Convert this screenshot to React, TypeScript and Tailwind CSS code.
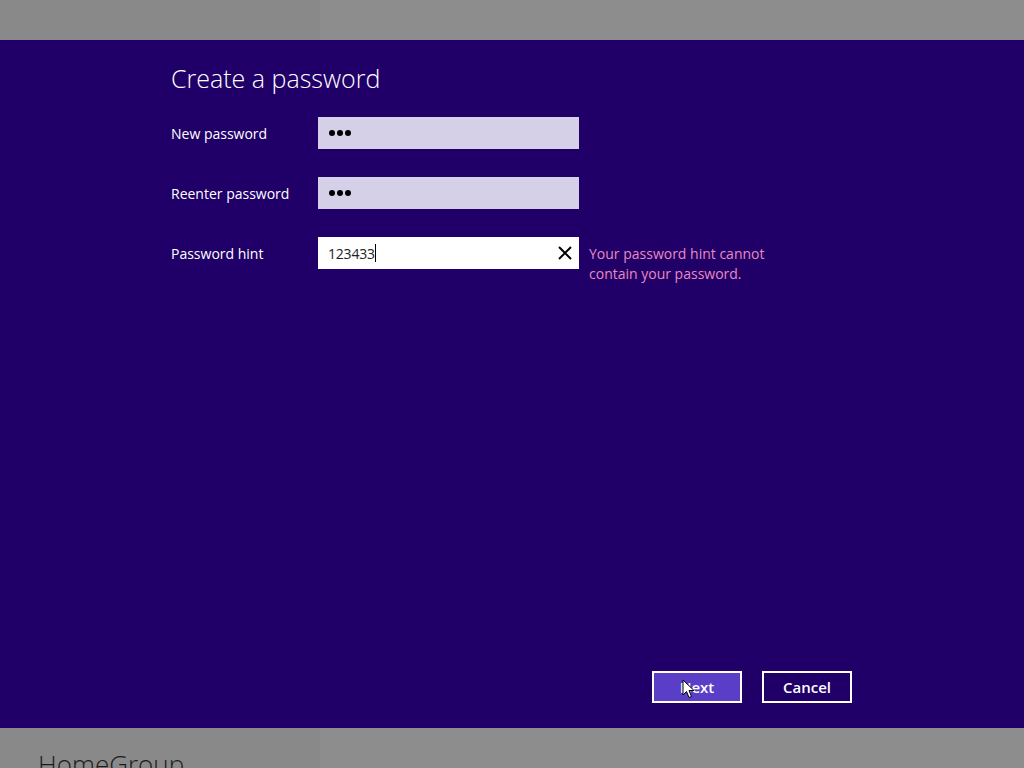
import React from 'react'

const font = { fontFamily: '"Open Sans", "Noto Sans", sans-serif' }

function Field({ label, children }: { label: string; children: React.ReactNode }) {
  return (
    <div className="flex items-start h-[32px]">
      <div className="w-[147px] h-[32px] flex items-center text-[14px] text-white">{label}</div>
      {children}
    </div>
  )
}

function Dots() {
  return (
    <div className="w-[261px] h-[32px] bg-[#d6cfe8] flex items-center pl-[11px] gap-[2px]">
      <span className="w-[6px] h-[6px] rounded-full bg-black" />
      <span className="w-[6px] h-[6px] rounded-full bg-black" />
      <span className="w-[6px] h-[6px] rounded-full bg-black" />
    </div>
  )
}

export default function App() {
  return (
    <div className="w-[1024px] h-[768px] overflow-hidden flex flex-col bg-[#8a8a8a]" style={font}>
      <div className="h-[40px] flex">
        <div className="w-[320px] bg-[#898989]" />
        <div className="flex-1 bg-[#8d8d8d]" />
      </div>

      <div className="h-[688px] bg-[#200068] relative flex flex-col pl-[171px] pt-[20px]">
        <h1 className="text-[25px] font-light text-white leading-[36px]">Create a password</h1>

        <div className="mt-[21px] flex flex-col gap-[28px]">
          <Field label="New password">
            <Dots />
          </Field>
          <Field label="Reenter password">
            <Dots />
          </Field>
          <Field label="Password hint">
            <div className="w-[261px] h-[32px] bg-white flex items-center pl-[10px] pr-[7px]">
              <span className="text-[14px] text-[#222] tracking-[-0.2px]">123433</span>
              <span className="w-[1px] h-[18px] bg-black" />
              <div className="flex-1" />
              <svg width="14" height="14" viewBox="0 0 14 14">
                <path d="M1 1 L13 13 M13 1 L1 13" stroke="#000" strokeWidth="2" />
              </svg>
            </div>
            <div className="ml-[10px] pt-[7px] text-[14px] leading-[20px] text-[#e88ac0]">
              Your password hint cannot
              <br />
              contain your password.
            </div>
          </Field>
        </div>

        <div className="flex-1" />

        <div className="flex gap-[20px] ml-[481px] mb-[25px]">
          <button className="relative w-[90px] h-[32px] border-2 border-white bg-[#5a3ec8] text-white text-[15px] font-semibold">
            Next
            <svg className="absolute left-[28px] top-[6px]" width="13" height="20" viewBox="0 0 13 20">
              <path d="M1 1 L1 16 L4.5 12.5 L7 18.5 L9.5 17.5 L7 11.5 L12 11.5 Z" fill="#fff" stroke="#000" strokeWidth="1" />
            </svg>
          </button>
          <button className="w-[90px] h-[32px] border-2 border-white bg-[#200068] text-white text-[15px] font-semibold">
            Cancel
          </button>
        </div>
      </div>

      <div className="h-[40px] flex">
        <div className="w-[320px] bg-[#898989] pl-[38px] pt-[18px]">
          <div className="text-[26px] font-light text-[#1c1c1c] leading-[36px]">HomeGroup</div>
        </div>
        <div className="flex-1 bg-[#8d8d8d]" />
      </div>
    </div>
  )
}
